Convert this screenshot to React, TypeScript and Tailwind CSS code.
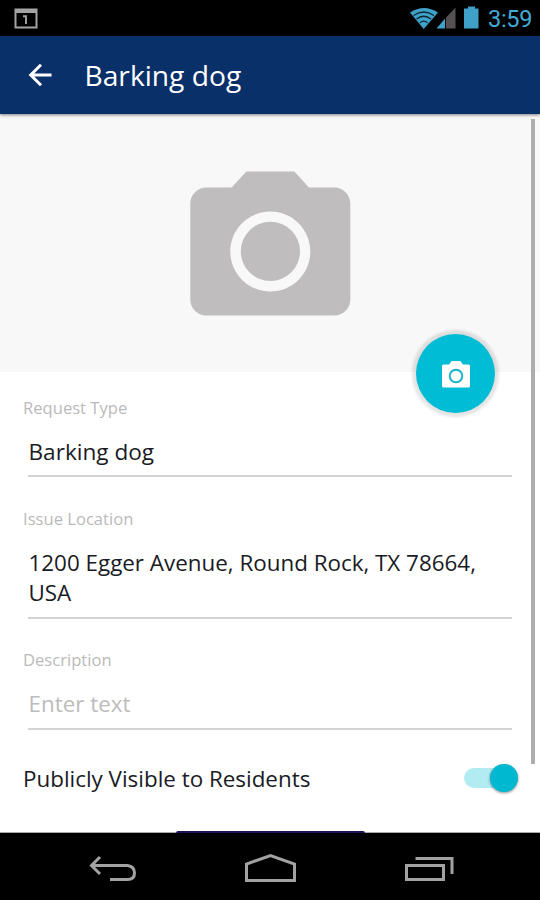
import React from "react";

function StatusBar() {
  return (
    <div className="flex h-9 shrink-0 items-center bg-black">
      <svg className="mt-[1px] ml-[14px] block" width="24" height="22" viewBox="0 0 24 22">
        <path d="M0.500 0.500H23.500V20.500H0.500ZM2.500 5V18.500H21.500V5Z" fill="#a4a4a4" fillRule="evenodd" />
        <path d="M9 8.200h3V16" fill="none" stroke="#a4a4a4" strokeWidth="1.9" />
      </svg>
      <svg className="ml-auto block" width="82" height="36" viewBox="0 0 82 36">
        <path d="M3 12.500Q17 3.500 31 12.500L16.700 29Z" fill="#3fa0c8" />
        <g fill="none" stroke="#0b2733" strokeWidth="1.3">
          <path d="M6.500 15.500Q16.700 8.500 27 15.500" />
          <path d="M9.500 19Q16.700 13.500 24 19" />
          <path d="M13 22.700Q16.700 19.500 20.500 22.700" />
        </g>
        <path d="M48.500 7.500V28.500H39V17.500Z" fill="#555051" />
        <path d="M38 18.500V28.500H29.500Z" fill="#3fa0c8" />
        <path d="M61 6.500h7V8.500h3.500V28.500H57V8.500h4Z" fill="#3fa0c8" />
      </svg>
      <span className="ml-[-1px] w-[52px] whitespace-nowrap pt-[2px] font-['Roboto',sans-serif] text-[23.5px] leading-[34px] tracking-[-0.3px] text-[#44abd6]">
        3:59
      </span>
    </div>
  );
}

function Header() {
  return (
    <header className="relative z-10 flex h-[78px] shrink-0 items-center bg-[#0a3069] shadow-[0_1px_3px_rgba(0,0,0,0.5)]">
      <svg className="ml-[28px] block" width="24" height="24" viewBox="0 0 24 24" fill="none" stroke="#fff" strokeWidth="3">
        <path d="M23.500 12H3M13 1.700L2.700 12L13 22.300" />
      </svg>
      <h1 className="ml-[32.500px] text-[28.2px] leading-[40px] text-white">Barking dog</h1>
    </header>
  );
}

function Hero() {
  return (
    <div className="relative flex h-[258px] shrink-0 justify-center bg-[#f8f8f8]">
      <svg className="mt-[41px] block" width="192" height="192" viewBox="0 0 24 24" fill="#bfbdbe">
        <circle cx="12.050" cy="12.050" r="3.700" />
        <path
          fillRule="evenodd"
          transform="translate(.04 .07)"
          d="M9 2L7.170 4H4c-1.100 0-2 .9-2 2v12c0 1.100.9 2 2 2h16c1.100 0 2-.9 2-2V6c0-1.100-.9-2-2-2h-3.170L15 2H9zm3 15c-2.760 0-5-2.240-5-5s2.240-5 5-5 5 2.240 5 5-2.240 5-5 5z"
        />
      </svg>
      <button className="absolute right-[45px] bottom-[-41px] flex size-[79px] items-center justify-center rounded-full bg-[#00bcd4] shadow-[0_0_3px_4px_rgba(0,0,0,0.11)]">
        <svg className="mt-[2px] block" width="28" height="27" viewBox="0 0 28 27">
          <path
            d="M9.500 0h9l2.300 3.500H26.500Q28 3.500 28 5V25Q28 26.500 26.500 26.500H1.500Q0 26.500 0 25V5Q0 3.500 1.500 3.500H7.200Z"
            fill="#fff"
          />
          <circle cx="14" cy="15" r="6.300" fill="none" stroke="#16b3cb" strokeWidth="1.900" />
        </svg>
      </button>
    </div>
  );
}

function Field({ label, className, children }: { label: string; className: string; children: React.ReactNode }) {
  return (
    <div className={"flex flex-col " + className}>
      <div className="pl-[23px] text-[16.6px] leading-6 text-[#bababa]">{label}</div>
      <div className="mr-[28px] ml-[28px] flex-1 border-b-2 border-[#d3d3d3] pt-[17px] pl-[0.5px] text-[22.4px] leading-[30px]">
        {children}
      </div>
    </div>
  );
}

function NavBar() {
  return (
    <nav className="h-[67px] shrink-0 bg-black">
      <svg className="block" width="540" height="67" viewBox="0 833 540 67" fill="none" stroke="#a2a2a2" strokeWidth="3">
        <path d="M92 865.500H127.500Q134.500 866.500 134.500 873Q134.500 879.500 127.500 879.500H110" />
        <path d="M100 857L91.500 865.500L100 874" />
        <path d="M246.500 880.500V864L270.500 855.500L294.500 864V880.500Z" />
        <path d="M406.500 865.500H443.500V879.500H406.500Z" />
        <path d="M415.500 858.500H452V874" />
      </svg>
    </nav>
  );
}

export default function App() {
  return (
    <div className="flex h-[900px] w-[540px] flex-col overflow-hidden bg-white font-['Open_Sans',sans-serif]">
      <StatusBar />
      <Header />
      <main className="relative flex h-[719px] shrink-0 flex-col overflow-hidden">
        <Hero />
        <Field label="Request Type" className="mt-[24px] h-[81px] shrink-0">
          <span className="text-[22.6px] text-[#191b24]">Barking dog</span>
        </Field>
        <Field label="Issue Location" className="mt-[30px] h-[112px] shrink-0">
          <span className="text-[#191b24]">
            1200 Egger Avenue, Round Rock, TX 78664,
            <br />
            USA
          </span>
        </Field>
        <Field label="Description" className="mt-[29px] h-[82px] shrink-0">
          <span className="text-[#bcbcbc]">Enter text</span>
        </Field>
        <div className="mt-[31px] flex h-[34px] shrink-0 items-center justify-between pr-[22px] pl-[23px]">
          <span className="pt-[2px] text-[22.4px] leading-[34px] text-[#191b24]">Publicly Visible to Residents</span>
          <div className="flex h-5 w-[54px] items-center justify-end rounded-full bg-[#b2ebf2]">
            <div className="size-7 shrink-0 rounded-full bg-[#00b8d0] shadow-[0_1px_3px_rgba(0,0,0,0.45)]" />
          </div>
        </div>
        <div className="mt-auto flex h-[2px] shrink-0 items-end">
          <div className="h-px flex-1 bg-[#aaa]" />
          <div className="h-[2px] w-[189px] rounded-t-[2px] bg-[#1b1456]" />
          <div className="h-px flex-1 bg-[#aaa]" />
        </div>
        <div className="absolute top-[5px] right-[5px] h-[645px] w-1 bg-[#adadad]" />
      </main>
      <NavBar />
    </div>
  );
}
